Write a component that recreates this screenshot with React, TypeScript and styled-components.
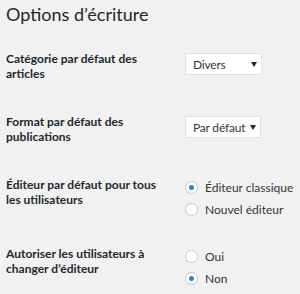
import styled, { createGlobalStyle } from 'styled-components';

const GlobalStyle = createGlobalStyle`
  html, body {
    margin: 0;
    padding: 0;
    background: #f1f1f1;
  }
  body {
    font-family: Lato, 'Liberation Sans', sans-serif;
    color: #23282d;
  }
`;

const Page = styled.div`
  width: 300px;
  height: 294px;
  padding: 0 6px;
  box-sizing: border-box;
  overflow: hidden;
`;

const Title = styled.h1`
  margin: 0;
  padding-top: 2px;
  height: 35px;
  box-sizing: border-box;
  font-size: 18px;
  line-height: 24px;
  font-weight: 400;
  color: #23282d;
`;

const Row = styled.div`
  display: flex;
  align-items: flex-start;
`;

const Label = styled.div`
  width: 179px;
  flex: none;
  box-sizing: border-box;
  padding: 16px 17px 17px 0;
  font-size: 12px;
  line-height: 15px;
  font-weight: 700;
  color: #23282d;
`;

const SelectCell = styled.div`
  padding-top: 18px;
`;

const SelectBox = styled.div<{ $width: number }>`
  width: ${(p) => p.$width}px;
  height: 22px;
  box-sizing: border-box;
  display: flex;
  align-items: center;
  justify-content: space-between;
  padding: 0 4px 0 7px;
  background: #fff;
  border: 1px solid #e2e2e2;
  font-size: 12px;
  letter-spacing: -0.2px;
  color: #32373c;
`;

const Caret = styled.svg`
  width: 6px;
  height: 5px;
  flex: none;
  fill: #23282d;
`;

const RadioGroup = styled.div`
  padding: 15px 0 10px;
`;

const RadioLine = styled.label`
  display: flex;
  align-items: center;
  height: 22px;
  gap: 7px;
  font-size: 12px;
  color: #32373c;
`;

const RadioDot = styled.span<{ $checked?: boolean }>`
  width: 13px;
  height: 13px;
  box-sizing: border-box;
  border-radius: 50%;
  border: 1px solid #c3c6ca;
  background: #fff;
  display: flex;
  align-items: center;
  justify-content: center;

  &::after {
    content: '';
    width: 5px;
    height: 5px;
    border-radius: 50%;
    background: ${(p) => (p.$checked ? '#1e8cbe' : 'transparent')};
  }
`;

const Select = ({ value, width }: { value: string; width: number }) => (
  <SelectCell>
    <SelectBox $width={width}>
      <span>{value}</span>
      <Caret viewBox="0 0 6 5">
        <path d="M0 0h6L3 5z" />
      </Caret>
    </SelectBox>
  </SelectCell>
);

const Radios = ({ options, checked }: { options: string[]; checked: number }) => (
  <RadioGroup>
    {options.map((o, i) => (
      <RadioLine key={o}>
        <RadioDot $checked={i === checked} />
        {o}
      </RadioLine>
    ))}
  </RadioGroup>
);

const App = () => (
  <Page>
    <GlobalStyle />
    <Title>Options d’écriture</Title>
    <Row>
      <Label>Catégorie par défaut des articles</Label>
      <Select value="Divers" width={77} />
    </Row>
    <Row>
      <Label>Format par défaut des publications</Label>
      <Select value="Par défaut" width={76} />
    </Row>
    <Row>
      <Label>Éditeur par défaut pour tous les utilisateurs</Label>
      <Radios options={['Éditeur classique', 'Nouvel éditeur']} checked={0} />
    </Row>
    <Row>
      <Label>Autoriser les utilisateurs à changer d’éditeur</Label>
      <Radios options={['Oui', 'Non']} checked={1} />
    </Row>
  </Page>
);

export default App;
